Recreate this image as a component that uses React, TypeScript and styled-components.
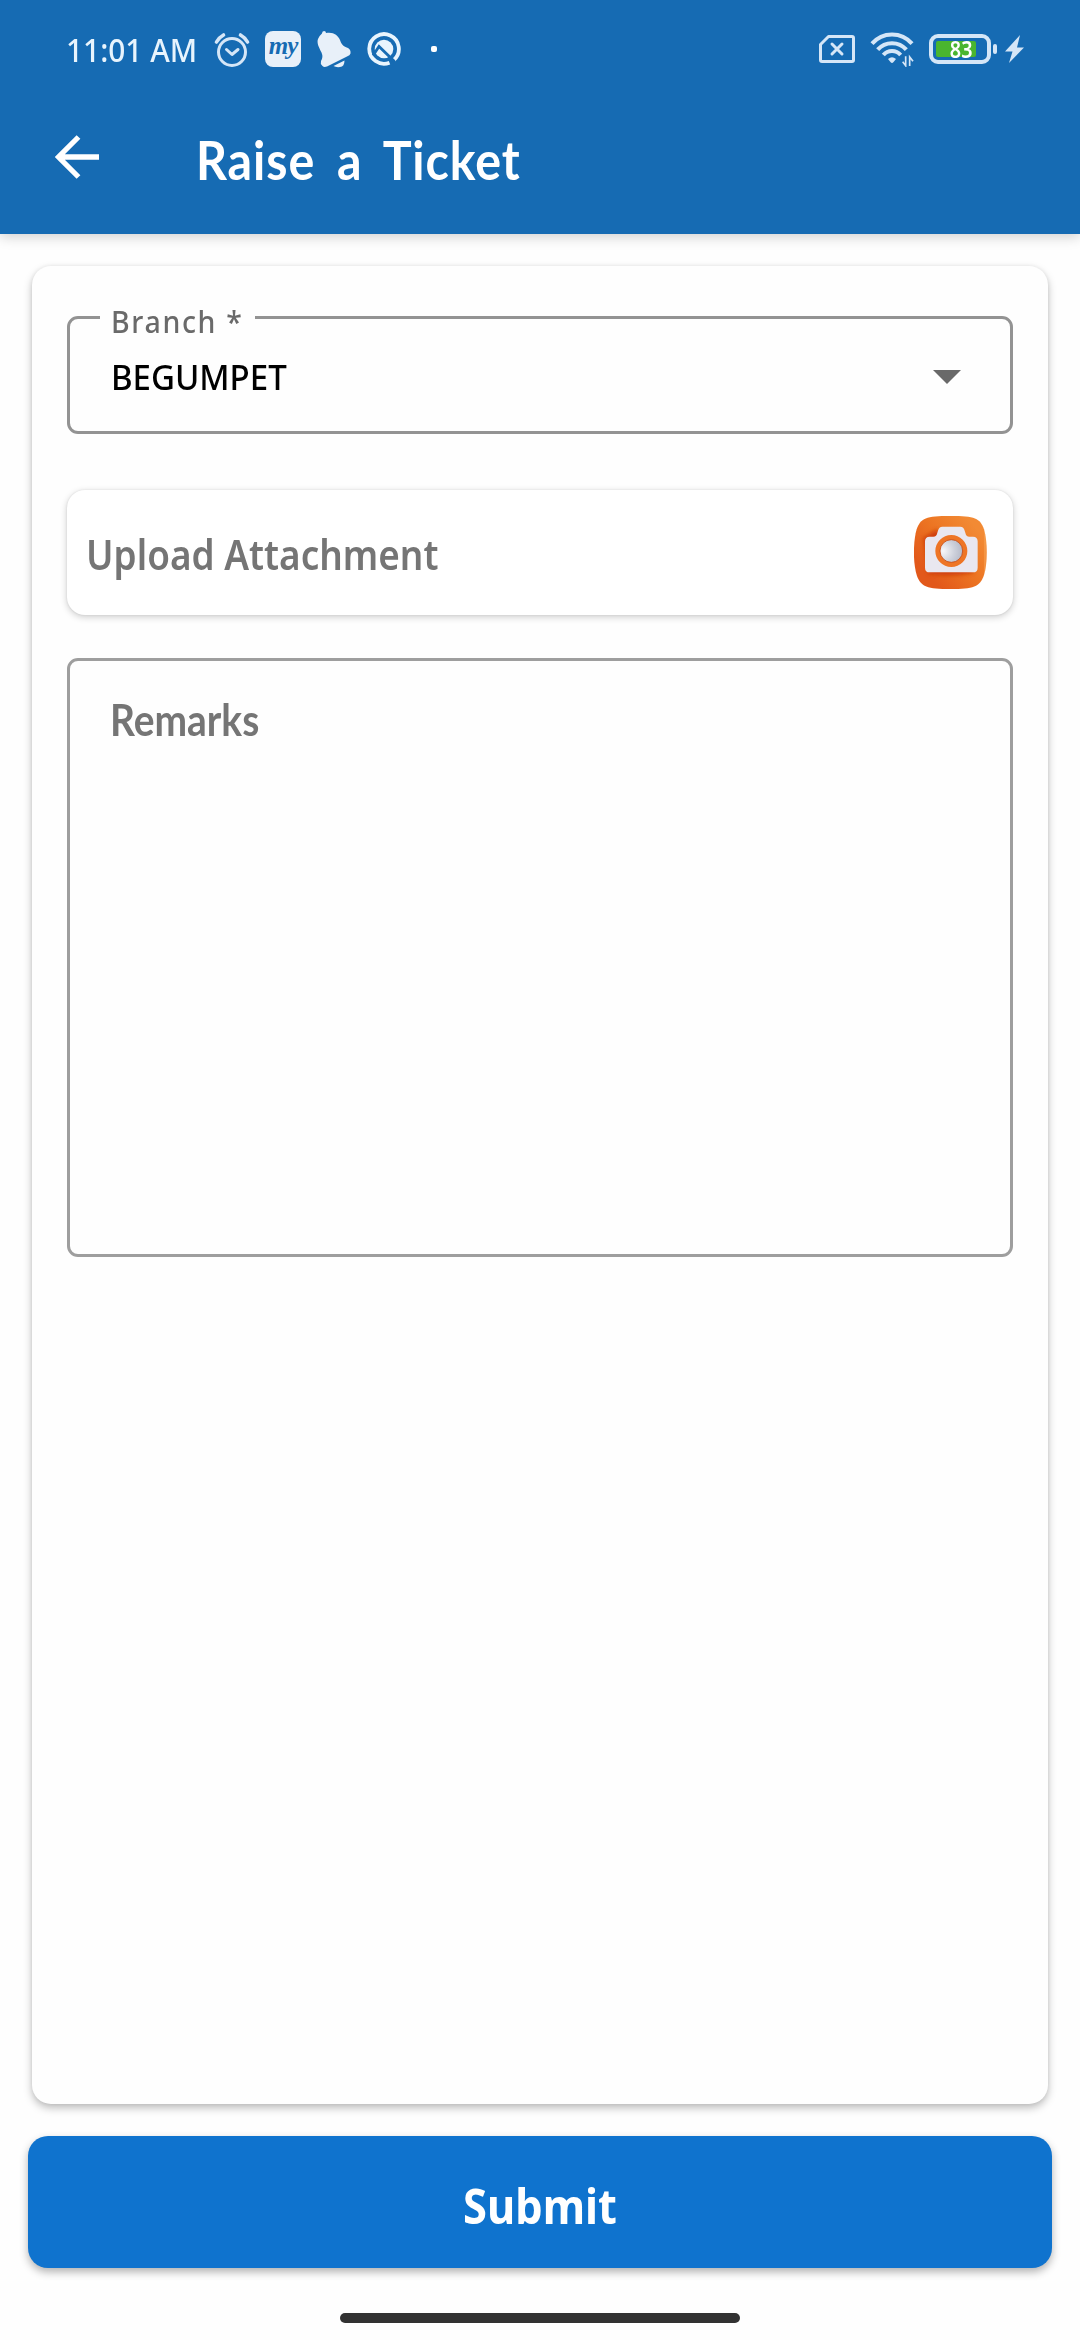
import React from "react";
import styled, { createGlobalStyle } from "styled-components";

const GlobalStyle = createGlobalStyle`
  * { box-sizing: border-box; }
  body { margin: 0; background: #fefefe; }
`;

const sans = `"Noto Sans", "Open Sans", sans-serif`;
const casual = `Lato, "Noto Sans", sans-serif`;

const Screen = styled.div`
  width: 1080px;
  height: 2340px;
  display: flex;
  flex-direction: column;
  background: #fefefe;
  font-family: ${sans};
`;

const Header = styled.header`
  height: 234px;
  flex: none;
  background: #166bb3;
  box-shadow: 0 3px 12px rgba(0, 0, 0, 0.18);
`;

const StatusBar = styled.div`
  height: 98px;
  display: flex;
  justify-content: space-between;
  align-items: center;
  padding: 0 56px 0 66px;
  color: #e8f1fa;
`;

const StatusGroup = styled.div<{ $gap: number }>`
  display: flex;
  align-items: center;
  gap: ${(p) => p.$gap}px;
`;

const Squeeze = styled.span<{ $x: number; $origin?: string }>`
  display: inline-block;
  white-space: nowrap;
  transform: scaleX(${(p) => p.$x});
  transform-origin: ${(p) => p.$origin ?? "left"} center;
`;

const Clock = styled.div`
  width: 133px;
  margin-top: 2px;
  font-size: 33px;
  font-weight: 500;
  line-height: 40px;
  color: #e8f4fd;
`;

const MyBadge = styled.div`
  width: 36px;
  height: 36px;
  border-radius: 8px;
  background: #e8f0f9;
  color: #166bb3;
  display: flex;
  justify-content: center;
  font: italic bold 25px/30px "Liberation Serif", serif;
  letter-spacing: -1px;
`;

const Dot = styled.div`
  width: 6px;
  height: 6px;
  border-radius: 2px;
  background: #fff;
  margin-left: 15px;
`;

const Battery = styled.div`
  position: relative;
  width: 62px;
  height: 30px;
  border: 4px solid #d5e6f7;
  border-radius: 9px;
  padding: 3px;
  margin-right: 2px;
`;

const Charge = styled.div`
  width: 40px;
  height: 16px;
  border-radius: 2px;
  background: #4ab52f;
`;

const Percent = styled.span`
  position: absolute;
  inset: 0;
  padding-left: 2px;
  text-align: center;
  color: #fff;
  font: 600 23px/23px ${sans};
`;

const Nub = styled.div`
  width: 4px;
  height: 10px;
  border-radius: 2px;
  background: #d5e6f7;
  margin-right: 8px;
`;

const AppBar = styled.div`
  height: 118px;
  display: flex;
  align-items: center;
  padding-left: 55px;
  gap: 97px;
`;

const Title = styled.h1`
  margin: 5px 0 0;
  color: #fff;
  font: 700 53px/60px ${casual};
  letter-spacing: 1px;
  word-spacing: 10px;
`;

const Card = styled.main`
  flex: none;
  height: 1838px;
  margin: 32px 32px 0;
  padding: 50px 35px;
  border-radius: 19px;
  background: #fefefe;
  box-shadow: 0 4px 9px rgba(0, 0, 0, 0.26), 0 0 4px rgba(0, 0, 0, 0.06);
`;

const SelectBox = styled.div`
  position: relative;
  height: 118px;
  border: 3px solid #939393;
  border-radius: 11px;
  display: flex;
  align-items: center;
  justify-content: space-between;
  padding: 4px 49px 0 41px;
`;

const FloatingLabel = styled.label`
  position: absolute;
  left: 30px;
  top: -16px;
  width: 155px;
  padding-left: 11px;
  background: #fefefe;
  color: #6a6a6a;
  font: 500 31px/36px ${sans};
  letter-spacing: 1.8px;
`;

const Value = styled.span`
  font-size: 35px;
  font-weight: 500;
  line-height: 40px;
  color: #000;
`;

const UploadCard = styled.div`
  margin-top: 56px;
  height: 125px;
  border-radius: 18px;
  background: #fff;
  box-shadow: 0 2px 7px rgba(0, 0, 0, 0.2), 0 0 2px rgba(0, 0, 0, 0.1);
  display: flex;
  align-items: center;
  justify-content: space-between;
  padding: 0 26px 0 19px;
`;

const UploadText = styled.span`
  margin-top: 3px;
  color: #757575;
  font-size: 41.5px;
  font-weight: 600;
  line-height: 50px;
`;

const Remarks = styled.div`
  margin-top: 43px;
  height: 599px;
  border: 3px solid #9e9e9e;
  border-radius: 11px;
  padding: 34px 40px;
  color: #757575;
  font: 700 43px/50px ${casual};
`;

const Submit = styled.button`
  flex: none;
  height: 132px;
  margin: 32px 28px 0;
  padding: 8px 0 0;
  border: 0;
  border-radius: 20px;
  background: #0f73ce;
  color: #fff;
  font: 700 48px/60px ${sans};
  box-shadow: 0 4px 9px rgba(0, 0, 0, 0.3);
`;

const HomeBar = styled.div`
  width: 400px;
  height: 10px;
  margin: 45px auto 0;
  border-radius: 5px;
  background: #323232;
`;

const Alarm = () => (
  <svg width="36" height="36" viewBox="0 0 36 36" fill="none" stroke="#d5e6f7" strokeWidth="3">
    <circle cx="18" cy="21" r="13.5" />
    <path d="M12.5 18.5l5.5 5 6-5" strokeLinecap="round" strokeLinejoin="round" />
    <path d="M2.5 11Q5 6.500 9.500 4M26.500 4Q31 6.500 33.500 11" strokeWidth="3.600" strokeLinecap="round" />
  </svg>
);

const Bell = () => (
  <svg width="36" height="38" viewBox="0 0 36 38" fill="#e8f0f9">
    <path d="M6 3.500Q6 1 8 1t2 2C17 1.500 22 5 24 10c1.500 4 2.500 6 8 8q3 1.500 2.500 5.500Q34 25.500 31 26.500L11 36.500Q8 37.500 6.500 36 4 33.500 5 31q2.500-4 .5-8.500C3 17.500.5 13 2 9q1-3 4-5.500z" />
    <path d="M17.500 36l11-5.500q0 6-4.500 6.500-4 .5-6.500-1z" />
  </svg>
);

const QMark = () => (
  <svg width="34" height="34" viewBox="0 0 34 34">
    <path d="M22.500 30.700A14.800 14.800 0 1 1 27 27.900" fill="none" stroke="#e8f4fd" strokeWidth="3.800" />
    <circle cx="17" cy="17" r="9.300" fill="#e8f4fd" />
    <path d="M6 23.500L12 14.500 27.500 29.500" fill="none" stroke="#166bb3" strokeWidth="2.800" />
  </svg>
);

const SimOff = () => (
  <svg width="36" height="28" viewBox="0 0 36 28" fill="none" stroke="#d5e6f7" strokeLinejoin="round">
    <path d="M9.500 1.500H33Q34.500 1.500 34.500 3V25Q34.500 26.500 33 26.500H3Q1.500 26.500 1.500 25V9.500z" strokeWidth="3" />
    <path d="M13 9l10 10M23 9L13 19" strokeWidth="3" strokeLinecap="round" />
  </svg>
);

const Wifi = () => (
  <svg width="44" height="36" viewBox="241 66 132 108" fill="none" stroke="#d5e6f7">
    <g strokeWidth="12">
      <path d="M247 104A79 79 0 0 1 367 104" />
      <path d="M264 122A57 57 0 0 1 350 122" />
      <path d="M281 138A34 34 0 0 1 333 138" />
    </g>
    <path d="M295 150q12-10 24 0l-8 10q-4 4-8 0z" fill="#d5e6f7" stroke="none" />
    <path d="M348 142V170L339 158M360 171V144L370 157" strokeWidth="5" />
  </svg>
);

const Bolt = () => (
  <svg width="19" height="28" viewBox="0 0 19 28" fill="#d5e6f7">
    <path d="M15 0L0 16.500h7.500L4 28 19 12.500h-7z" />
  </svg>
);

const BackArrow = () => (
  <svg width="44" height="44" viewBox="0 0 44 44" fill="none" stroke="#fff" strokeWidth="5.300">
    <path d="M44 22H4M23.500 2L3.500 22l20 20" />
  </svg>
);

const Camera = () => (
  <svg width="73" height="73" viewBox="57 48 219 219">
    <defs>
      <linearGradient id="tile" x1="0.1" y1="0.7" x2="0.8" y2="0.1">
        <stop offset="0" stopColor="#e2581a" />
        <stop offset="0.5" stopColor="#ec7422" />
        <stop offset="1" stopColor="#f28a34" />
      </linearGradient>
      <radialGradient id="lens" cx="0.2" cy="0.5" r="0.8">
        <stop offset="0" stopColor="#f7f7fa" />
        <stop offset="0.5" stopColor="#cfd2dc" />
        <stop offset="1" stopColor="#aeb3c3" />
      </radialGradient>
      <filter id="soft" x="-20%" y="-20%" width="140%" height="140%">
        <feGaussianBlur stdDeviation="6" />
      </filter>
      <clipPath id="tileClip">
        <path d="M166 48C240 48 255 54 267 88 278 125 278 190 267 225 255 261 235 267 166 267 97 267 77 261 65 225 54 190 54 125 65 88 77 54 92 48 166 48z" />
      </clipPath>
    </defs>
    <g clipPath="url(#tileClip)">
      <rect x="57" y="48" width="219" height="219" fill="url(#tile)" />
      <path d="M276 75q-10 80-6 165" fill="none" stroke="#ffc07a" strokeWidth="8" opacity="0.7" filter="url(#soft)" />
      <path d="M84 115L125 88l20 20 90 60v50q-70 14-135 4z" fill="#cf3f0c" filter="url(#soft)" />
    </g>
    <path
      d="M104 110h11q10 0 12-12l3-9q3-9 12-9h54q9 0 12 9l3 9q2 12 12 12h11q14 0 14 14v79q0 14-14 14H104q-14 0-14-14v-79q0-14 14-14z"
      fill="#e9e7f0"
    />
    <circle cx="169" cy="153" r="41" fill="url(#lens)" stroke="#ee7526" strokeWidth="14" />
    <circle cx="169" cy="153" r="34" fill="none" stroke="#c9480f" strokeWidth="2.500" />
  </svg>
);

const Caret = () => (
  <svg width="28" height="14" viewBox="0 0 28 14">
    <path d="M0 0h28L14 14z" fill="#696969" />
  </svg>
);

export default function App() {
  return (
    <>
      <GlobalStyle />
      <Screen>
        <Header>
          <StatusBar>
            <StatusGroup $gap={15}>
              <Clock>
                <Squeeze $x={0.905}>11:01 AM</Squeeze>
              </Clock>
              <Alarm />
              <MyBadge>my</MyBadge>
              <Bell />
              <QMark />
              <Dot />
            </StatusGroup>
            <StatusGroup $gap={0}>
              <StatusGroup $gap={15}>
                <SimOff />
                <Wifi />
                <Battery>
                  <Charge />
                  <Percent>
                    <Squeeze $x={0.86} $origin="center">83</Squeeze>
                  </Percent>
                </Battery>
              </StatusGroup>
              <Nub />
              <Bolt />
            </StatusGroup>
          </StatusBar>
          <AppBar>
            <BackArrow />
            <Title>
              <Squeeze $x={0.912}>Raise a Ticket</Squeeze>
            </Title>
          </AppBar>
        </Header>
        <Card>
          <SelectBox>
            <FloatingLabel>
              <Squeeze $x={0.92}>Branch *</Squeeze>
            </FloatingLabel>
            <Value>
              <Squeeze $x={0.943}>BEGUMPET</Squeeze>
            </Value>
            <Caret />
          </SelectBox>
          <UploadCard>
            <UploadText>
              <Squeeze $x={0.89}>Upload Attachment</Squeeze>
            </UploadText>
            <Camera />
          </UploadCard>
          <Remarks>
            <Squeeze $x={0.905}>Remarks</Squeeze>
          </Remarks>
        </Card>
        <Submit>
          <Squeeze $x={0.905} $origin="center">Submit</Squeeze>
        </Submit>
        <HomeBar />
      </Screen>
    </>
  );
}
